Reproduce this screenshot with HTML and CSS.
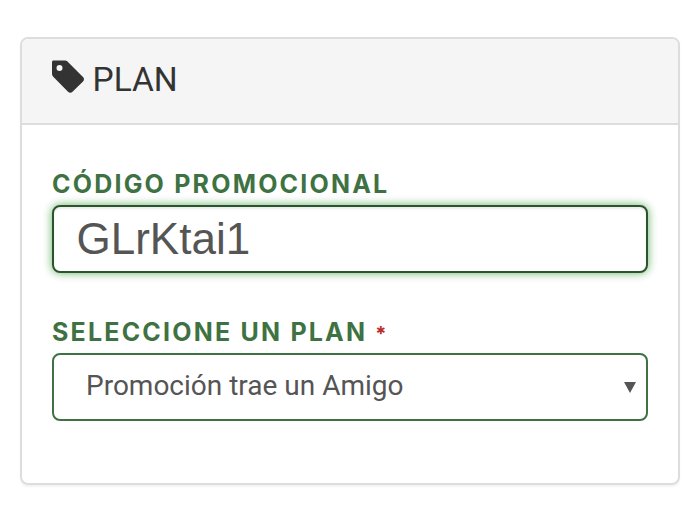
FILE: index.html
```html
<!DOCTYPE html>
<html lang="es">
<head>
<meta charset="utf-8">
<title>Plan</title>
<link rel="stylesheet" href="styles.css">
</head>
<body>
<section class="panel">
  <header class="panel-heading">
    <svg class="tag" viewBox="0 0 32 32" aria-hidden="true"><path fill-rule="evenodd" d="M0 1.500C0 .7.7 0 1.500 0H13c1 0 1.800.4 2.500 1L31 16.500c1.300 1.300 1.300 3.200 0 4.500L20.500 31.200c-1.300 1.300-3.200 1.300-4.500 0L1 16C.4 15.300 0 14.500 0 13.500ZM7.500 4.500a3 3 0 1 0 0 6 3 3 0 0 0 0-6Z"/></svg>
    <h2 class="panel-title">PLAN</h2>
  </header>
  <div class="panel-body">
    <div class="field">
      <label class="label">CÓDIGO PROMOCIONAL</label>
      <div class="control control-focus"><span class="value">GLrKtai1</span></div>
    </div>
    <div class="field">
      <label class="label">SELECCIONE UN PLAN <span class="req">*</span></label>
      <div class="control control-select">
        <span class="value">Promoción trae un Amigo</span>
        <svg class="caret" viewBox="0 0 12 12" aria-hidden="true"><path d="M0 .5h12L6 11.500Z"/></svg>
      </div>
    </div>
  </div>
</section>
</body>
</html>
```
FILE: styles.css
```css
* { box-sizing: border-box; }
html, body { margin: 0; background: #fff; }
body { padding: 37px 11px 37px 20px; font-family: "Open Sans", sans-serif; }
.panel {
  height: 448px;
  border: 2px solid #ddd;
  border-radius: 8px;
  box-shadow: 0 2px 2px rgba(0,0,0,.05);
  overflow: hidden;
}
.panel-heading {
  height: 86px;
  background: #f5f5f5;
  border-bottom: 2px solid #ddd;
  padding: 21px 30px 0;
  display: flex;
  align-items: flex-start;
  gap: 8.500px;
  color: #333;
}
.tag { width: 32px; height: 33px; fill: #333; flex: none; }
.panel-title {
  margin: 0;
  font-family: Roboto, sans-serif;
  font-weight: 400;
  font-size: 33.500px;
  line-height: 40px;
  color: #333;
}
.panel-body { padding: 47px 30px 0; }
.field { margin-bottom: 47px; }
.label {
  display: block;
  font-family: Inter, sans-serif;
  font-weight: 700;
  font-size: 25px;
  letter-spacing: 2.200px;
  color: #3f7243;
  height: 33px;
  line-height: 24px;
}
.req { color: #b92c28; font-size: 20px; }
.control {
  height: 68px;
  border: 2px solid #3f7243;
  border-radius: 8px;
  background: #fff;
  color: #555;
  display: flex;
  align-items: center;
}
.control-focus {
  border-color: #2b542c;
  box-shadow: inset 0 2px 2px rgba(0,0,0,.075), 0 0 10px #67b168;
  font-family: "Liberation Sans", sans-serif;
  font-size: 44px;
  line-height: 1;
  padding: 0 0 1px 22.500px;
}
.control-select {
  font-family: Roboto, sans-serif;
  font-size: 28px;
  line-height: 1;
  padding: 0 10px 2px 32px;
  justify-content: space-between;
}
.caret { width: 12px; height: 13px; fill: #555; margin-top: 2px; }
```
